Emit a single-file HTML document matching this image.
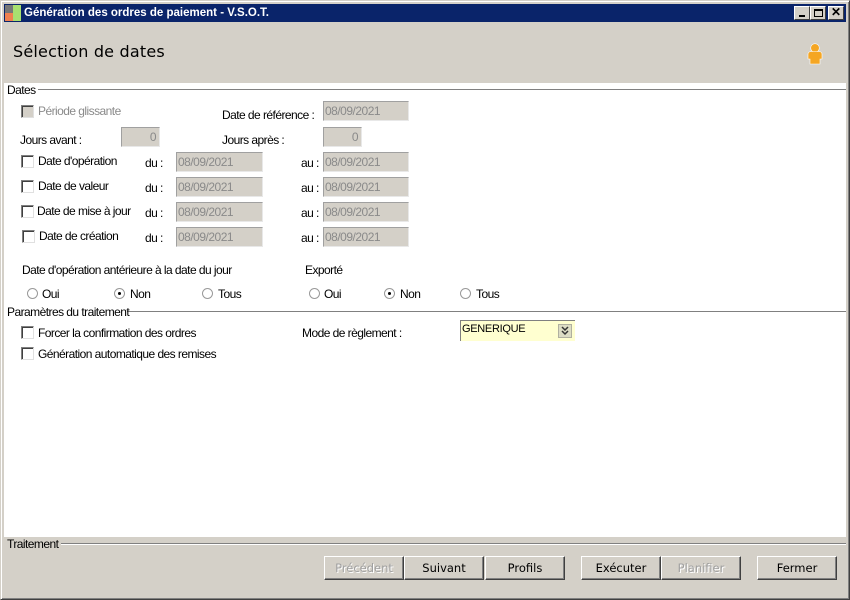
<!DOCTYPE html>
<html><head><meta charset="utf-8"><style>
*{box-sizing:border-box;margin:0;padding:0}
body{width:850px;height:600px;background:#d4d0c8;position:relative;overflow:hidden;font-family:"Liberation Sans",Arial,sans-serif;font-size:12px;color:#000}
.a{position:absolute;white-space:nowrap}
.t{font-size:12px;letter-spacing:-0.55px}
.in{position:absolute;background:#d4d0c8;border:1px solid #a0a0a0;border-bottom-color:#e8e8e8;border-right-color:#e8e8e8;color:#8a8a8a;font-size:12px;padding:2px 0 0 1px;height:20px;letter-spacing:-0.5px}
.cb{position:absolute;width:13px;height:13px;background:#fff;border:1px solid #808080;border-right-color:#e0e0e0;border-bottom-color:#e0e0e0;box-shadow:inset 1px 1px 0 #404040}
.rb{position:absolute;width:11px;height:11px;border-radius:50%;border:1px solid #999;background:#fff}
.rb.on::after{content:"";position:absolute;left:3px;top:3px;width:3px;height:3px;border-radius:50%;background:#000}
.btn{position:absolute;top:556px;height:24px;width:80px;border:1px solid;border-color:#fff #404040 #404040 #fff;box-shadow:inset -1px -1px 0 #808080;text-align:center;line-height:22px;font-family:"DejaVu Sans",sans-serif;font-size:11.5px}
.dis{color:#a0a0a0;text-shadow:1px 1px 0 #fff}
.line{position:absolute;height:2px;border-top:1px solid #808080;border-bottom:1px solid #fff}
</style></head><body>
<div class="a" style="left:0;top:0;width:850px;height:600px;border:1px solid #d4d0c8;border-right-color:#404040;border-bottom-color:#404040;box-shadow:inset 1px 1px 0 #fff,inset -1px -1px 0 #808080"></div>
<div class="a" style="left:4px;top:4px;width:842px;height:18px;background:#0a246a"></div>
<div class="a" style="left:5px;top:5px;width:8px;height:16px;background:#777"></div>
<div class="a" style="left:5px;top:13px;width:8px;height:8px;background:#f08050"></div>
<div class="a" style="left:13px;top:5px;width:8px;height:16px;background:#a8e070"></div>
<div class="a" style="left:24px;top:5px;color:#fff;font-family:'Liberation Sans',sans-serif;font-weight:bold;font-size:11.5px;line-height:16px">Génération des ordres de paiement - V.S.O.T.</div>
<div class="a" style="left:794px;top:6px;width:16px;height:14px;background:#d4d0c8;border:1px solid;border-color:#fff #404040 #404040 #fff"><div class="a" style="left:4px;top:8px;width:6px;height:2px;background:#000"></div></div>
<div class="a" style="left:810px;top:6px;width:16px;height:14px;background:#d4d0c8;border:1px solid;border-color:#fff #404040 #404040 #fff"><div class="a" style="left:3px;top:2px;width:9px;height:8px;border:1px solid #000;border-top-width:2px"></div></div>
<div class="a" style="left:828px;top:6px;width:16px;height:14px;background:#d4d0c8;border:1px solid;border-color:#fff #404040 #404040 #fff;font-size:12px;line-height:11px;text-align:center;font-weight:bold">✕</div>
<div class="a" style="left:13px;top:42px;font-family:'DejaVu Sans',sans-serif;font-size:16px;letter-spacing:0.2px">Sélection de dates</div>
<svg class="a" style="left:806px;top:43px" width="18" height="22" viewBox="0 0 18 22"><circle cx="9" cy="5" r="4.3" fill="#f5a623" stroke="#fff" stroke-width="0.6"/><path d="M2 11 Q2 8.5 6 8.5 L12 8.5 Q16 8.5 16 11 L16 16 L14 16 L14 21 L4 21 L4 16 L2 16 Z" fill="#f5a623" stroke="#fff" stroke-width="0.6"/></svg>
<div class="a" style="left:4px;top:83px;width:842px;height:454px;background:#fff"></div>
<div class="line" style="left:38px;top:89px;width:808px"></div>
<div class="a t" style="left:7px;top:83px">Dates</div>
<div class="cb" style="left:21px;top:105px;background:#d4d0c8"></div>
<div class="a t" style="left:38px;top:104px;color:#8a8a8a">Période glissante</div>
<div class="a t" style="left:222px;top:108px">Date de référence :</div>
<div class="in" style="left:323px;top:101px;width:86px">08/09/2021</div>
<div class="a t" style="left:20px;top:133px">Jours avant :</div>
<div class="in" style="left:121px;top:127px;width:39px;text-align:right;padding-right:3px">0</div>
<div class="a t" style="left:222px;top:133px">Jours après :</div>
<div class="in" style="left:323px;top:127px;width:39px;text-align:right;padding-right:3px">0</div>
<div class="cb" style="left:21px;top:155px"></div><div class="a t" style="left:38px;top:154px">Date d'opération</div>
<div class="cb" style="left:21px;top:180px"></div><div class="a t" style="left:38px;top:179px">Date de valeur</div>
<div class="cb" style="left:21px;top:205px"></div><div class="a t" style="left:37px;top:204px">Date de mise à jour</div>
<div class="cb" style="left:22px;top:230px"></div><div class="a t" style="left:39px;top:229px">Date de création</div>
<div class="a t" style="left:145px;top:156px">du :</div><div class="in" style="left:176px;top:152px;width:87px">08/09/2021</div>
<div class="a t" style="left:145px;top:181px">du :</div><div class="in" style="left:176px;top:177px;width:87px">08/09/2021</div>
<div class="a t" style="left:145px;top:206px">du :</div><div class="in" style="left:176px;top:202px;width:87px">08/09/2021</div>
<div class="a t" style="left:145px;top:231px">du :</div><div class="in" style="left:176px;top:227px;width:87px">08/09/2021</div>
<div class="a t" style="left:301px;top:156px">au :</div><div class="in" style="left:323px;top:152px;width:86px">08/09/2021</div>
<div class="a t" style="left:301px;top:181px">au :</div><div class="in" style="left:323px;top:177px;width:86px">08/09/2021</div>
<div class="a t" style="left:301px;top:206px">au :</div><div class="in" style="left:323px;top:202px;width:86px">08/09/2021</div>
<div class="a t" style="left:301px;top:231px">au :</div><div class="in" style="left:323px;top:227px;width:86px">08/09/2021</div>
<div class="a t" style="left:22px;top:263px">Date d'opération antérieure à la date du jour</div>
<div class="a t" style="left:305px;top:263px">Exporté</div>
<div class="rb" style="left:27px;top:288px"></div><div class="a t" style="left:42px;top:287px">Oui</div>
<div class="rb on" style="left:114px;top:288px"></div><div class="a t" style="left:130px;top:287px">Non</div>
<div class="rb" style="left:202px;top:288px"></div><div class="a t" style="left:218px;top:287px">Tous</div>
<div class="rb" style="left:309px;top:288px"></div><div class="a t" style="left:324px;top:287px">Oui</div>
<div class="rb on" style="left:384px;top:288px"></div><div class="a t" style="left:400px;top:287px">Non</div>
<div class="rb" style="left:460px;top:288px"></div><div class="a t" style="left:476px;top:287px">Tous</div>
<div class="line" style="left:127px;top:311px;width:719px"></div>
<div class="a t" style="left:7px;top:305px">Paramètres du traitement</div>
<div class="cb" style="left:21px;top:326px"></div><div class="a t" style="left:38px;top:326px">Forcer la confirmation des ordres</div>
<div class="cb" style="left:21px;top:347px"></div><div class="a t" style="left:38px;top:347px">Génération automatique des remises</div>
<div class="a t" style="left:302px;top:326px">Mode de règlement :</div>
<div class="a" style="left:460px;top:320px;width:115px;height:21px;background:#ffffd0;border-left:1px solid #808080;border-top:1px solid #808080"></div>
<div class="a t" style="left:462px;top:323px;font-size:11px;letter-spacing:-0.3px">GENERIQUE</div>
<svg class="a" style="left:558px;top:324px" width="14" height="14" viewBox="0 0 14 14"><rect x="0.5" y="0.5" width="13" height="13" fill="#dcdcc4" stroke="#b0b0a0"/><path d="M4 3 L7 6 L10 3 M4 7 L7 10 L10 7" fill="none" stroke="#333" stroke-width="1.5"/></svg>
<div class="line" style="left:61px;top:543px;width:785px"></div>
<div class="a t" style="left:7px;top:537px">Traitement</div>
<div class="btn dis" style="left:324px">Précédent</div>
<div class="btn" style="left:404px">Suivant</div>
<div class="btn" style="left:485px">Profils</div>
<div class="btn" style="left:581px">Exécuter</div>
<div class="btn dis" style="left:661px">Planifier</div>
<div class="btn" style="left:757px">Fermer</div>
</body></html>
